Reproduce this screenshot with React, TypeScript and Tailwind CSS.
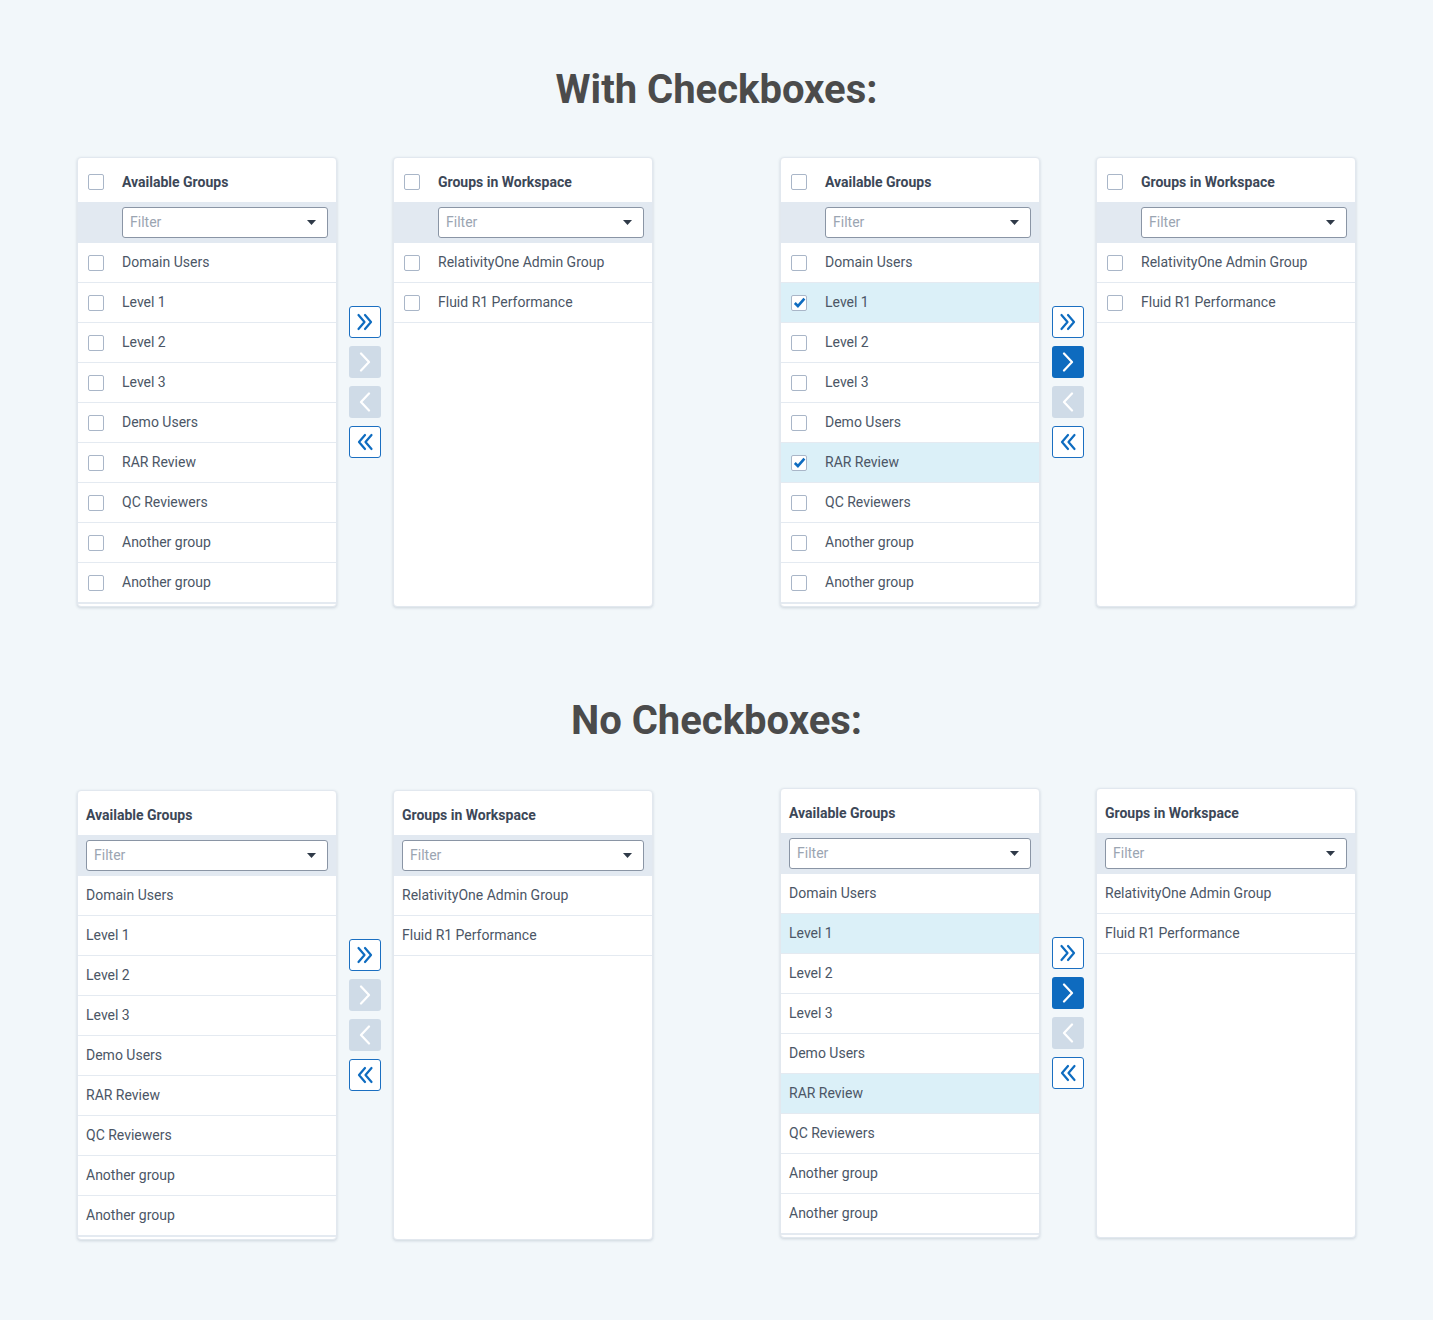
import { memo } from "react";

const available = [
  "Domain Users",
  "Level 1",
  "Level 2",
  "Level 3",
  "Demo Users",
  "RAR Review",
  "QC Reviewers",
  "Another group",
  "Another group",
];
const workspace = ["RelativityOne Admin Group", "Fluid R1 Performance"];

const Checkbox = ({ checked }: { checked?: boolean }) => (
  <span className="flex h-4 w-4 flex-shrink-0 items-center justify-center rounded-[2px] border border-[#a9b6c8] bg-white">
    {checked && (
      <svg width="13" height="13" viewBox="0 0 13 13">
        <path d="M1.8 7 L4.9 10 L11.4 2.6" fill="none" stroke="#0e6cc0" strokeWidth="2.6" />
      </svg>
    )}
  </span>
);

const Filter = () => (
  <div className="flex h-[31px] flex-1 items-center justify-between rounded-[3px] border border-[#8a95a5] bg-white pl-[7px] pr-[11px] text-[14px] text-[#9ba5b2]">
    <span>Filter</span>
    <svg width="9" height="5" viewBox="0 0 9 5">
      <path d="M0 0 H9 L4.5 5 Z" fill="#2f3a48" />
    </svg>
  </div>
);

type PanelProps = {
  title: string;
  items: string[];
  checks: boolean;
  selected?: number[];
};

const Panel = ({ title, items, checks, selected = [] }: PanelProps) => (
  <div className="flex h-[450px] w-[260px] flex-col overflow-hidden rounded-[4px] border border-[#e2e8ef] bg-white shadow-[0_1px_3px_rgba(40,60,90,0.18)]">
    <div className={`flex h-11 flex-shrink-0 items-center pt-1 ${checks ? "pl-[10px]" : "pl-2"}`}>
      {checks && (
        <span className="mr-[18px]">
          <Checkbox />
        </span>
      )}
      <span className="text-[14px] font-bold text-[#3c4757]">{title}</span>
    </div>
    <div className={`flex h-[41px] flex-shrink-0 items-center bg-[#e2e9f1] pr-2 ${checks ? "pl-[44px]" : "pl-2"}`}>
      <Filter />
    </div>
    <div className="flex flex-col">
      {items.map((it, i) => (
        <div
          key={i}
          className={`flex h-10 flex-shrink-0 items-center border-b border-[#e4eaf1] text-[14px] text-[#4b5666] ${
            checks ? "pl-[10px]" : "pl-2"
          } ${selected.includes(i) ? "bg-[#dbf0f8]" : ""}`}
        >
          {checks && (
            <span className="mr-[18px]">
              <Checkbox checked={selected.includes(i)} />
            </span>
          )}
          {it}
        </div>
      ))}
      {items.length > 5 && <div className="h-10 border-t border-[#e4eaf1]" />}
    </div>
  </div>
);

const Chevron = ({ dir, double }: { dir: "r" | "l"; double?: boolean }) => {
  const flip = dir === "l" ? "scale(-1,1) translate(-20,0)" : undefined;
  return (
    <svg width="20" height="20" viewBox="0 0 20 20">
      <g transform={flip} fill="none" stroke="currentColor" strokeWidth="2.2" strokeLinecap="round" strokeLinejoin="round">
        {double ? (
          <>
            <path d="M3.5 3 L9.5 10 L3.5 17" />
            <path d="M10 3 L16 10 L10 17" />
          </>
        ) : (
          <path d="M6 1.5 L14 10 L6 18.5" />
        )}
      </g>
    </svg>
  );
};

const Btn = ({ kind, dir, double }: { kind: "outline" | "off" | "on"; dir: "r" | "l"; double?: boolean }) => {
  const cls =
    kind === "outline"
      ? "border border-[#1b6fc1] bg-white text-[#0e6cc0]"
      : kind === "on"
        ? "bg-[#0e6bbf] text-white"
        : "bg-[#cfdbe7] text-white";
  return (
    <div className={`flex h-8 w-8 items-center justify-center rounded-[3px] ${cls}`}>
      <Chevron dir={dir} double={double} />
    </div>
  );
};

const Pair = ({ checks, active, drop }: { checks: boolean; active: boolean; drop?: boolean }) => (
  <div className={`flex items-center gap-3 ${drop ? "mt-[2px]" : ""}`}>
    <Panel title="Available Groups" items={available} checks={checks} selected={active ? [1, 5] : []} />
    <div className="flex flex-col gap-2">
      <Btn kind="outline" dir="r" double />
      <Btn kind={active ? "on" : "off"} dir="r" />
      <Btn kind="off" dir="l" />
      <Btn kind="outline" dir="l" double />
    </div>
    <Panel title="Groups in Workspace" items={workspace} checks={checks} />
  </div>
);

const Section = ({ title, checks }: { title: string; checks: boolean }) => (
  <div className="flex flex-col items-center">
    <h1 className="h-12 text-[40px] leading-[48px] font-bold text-[#4b4b4b]">{title}</h1>
    <div className="mt-[43px] flex items-start justify-center gap-[127px]">
      <Pair checks={checks} active={false} drop={!checks} />
      <Pair checks={checks} active />
    </div>
  </div>
);

const App = () => (
  <div className="min-h-[1320px] w-full bg-[#f2f7fa] pt-[66px] font-['Roboto',sans-serif]">
    <Section title="With Checkboxes:" checks />
    <div className="h-[90px]" />
    <Section title="No Checkboxes:" checks={false} />
  </div>
);

export default memo(App);
